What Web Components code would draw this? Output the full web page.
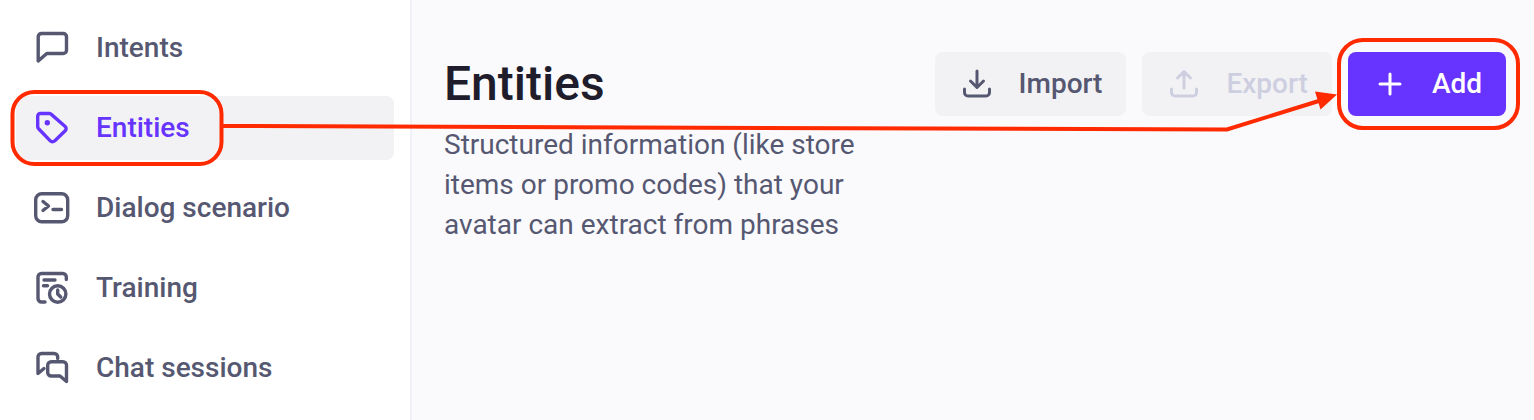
<!DOCTYPE html>
<html lang="en">
<head>
<meta charset="utf-8">
<title>Entities</title>
<style>
	html, body { margin: 0; height: 420px; overflow: hidden; }
	body { font-family: Roboto, "Liberation Sans", sans-serif; }
</style>
</head>
<body>
<app-shell>
	<side-nav slot="nav">
		<nav-item icon="chat">Intents</nav-item>
		<nav-item icon="tag" active>Entities</nav-item>
		<nav-item icon="terminal">Dialog scenario</nav-item>
		<nav-item icon="training">Training</nav-item>
		<nav-item icon="sessions">Chat sessions</nav-item>
	</side-nav>
	<page-header title-text="Entities">
		<action-button slot="actions" icon="download">Import</action-button>
		<action-button slot="actions" icon="upload" disabled>Export</action-button>
		<action-button slot="actions" icon="plus" primary>Add</action-button>
		Structured information (like store items or promo codes) that your avatar can extract from phrases
	</page-header>
</app-shell>
<callout-overlay></callout-overlay>

<script>
const ICONS = {
	chat: `<path d="M4.2 6.8a3.3 3.3 0 0 1 3.3-3.3h21.7a3.3 3.3 0 0 1 3.3 3.3v13.4a3.3 3.3 0 0 1-3.3 3.3H12.8L4.2 31z"/>`,
	tag: `<path d="M3.7 6.2a2.7 2.7 0 0 1 2.7-2.7h8.8a3 3 0 0 1 2.1.9l13.9 12.1a3 3 0 0 1 0 4.3L20.6 30.9a3 3 0 0 1-4.3 0L4.6 18.8a3 3 0 0 1-.9-2.1z"/><circle cx="13.3" cy="12.7" r="2.7" fill="currentColor" stroke="none"/>`,
	terminal: `<rect x="1.7" y="3.7" width="32" height="28" rx="6"/><path d="M9 11.5l5.5 4.5-5.5 4.5M19 19.5h8.5"/>`,
	training: `<path d="M32.3 9.5V7a3.5 3.5 0 0 0-3.5-3.5H7.5A3.5 3.5 0 0 0 4 7v21.5A3.5 3.5 0 0 0 7.5 32H11M10 10h11M9.5 15.7h4"/><circle cx="23.7" cy="24" r="8.2"/><path d="M23.7 20v4l3 3"/>`,
	sessions: `<path d="M23.7 8.5V7a3.5 3.5 0 0 0-3.5-3.5H7.5A3.5 3.5 0 0 0 4 7v16.5l6-5"/><path d="M17.2 11.7h11.8a3.5 3.5 0 0 1 3.5 3.5v16.3l-6.5-5.5h-8.8a3.5 3.5 0 0 1-3.5-3.5v-7.3a3.5 3.5 0 0 1 3.5-3.5z"/>`,
	download: `<path d="M18 5v16M11.5 15l6.5 6.5 6.5-6.5M5.5 23v3.5a3.5 3.5 0 0 0 3.5 3.5h18a3.5 3.5 0 0 0 3.5-3.5V23"/>`,
	upload: `<path d="M18 22V6M11.5 12L18 5.5l6.5 6.5M5.5 23v3.5a3.5 3.5 0 0 0 3.5 3.5h18a3.5 3.5 0 0 0 3.5-3.5V23"/>`,
	plus: `<path d="M18 8v20M8 18h20"/>`,
}

function iconSvg(name, width){
	return `<svg viewBox="0 0 36 36" width="36" height="36" fill="none" stroke="currentColor" stroke-width="${width}" stroke-linecap="round" stroke-linejoin="round">${ICONS[name] || ""}</svg>`
}

class AppShell extends HTMLElement{
	constructor(){
		super()
		this.attachShadow({mode: "open"}).innerHTML = `
			<style>
				:host{ display: grid; grid-template-columns: 412px 1fr; height: 420px; background: #fafafc; }
				aside{ background: #fff; border-right: 2px solid #f1f1f9; box-sizing: border-box; }
				main{ min-width: 0; }
			</style>
			<aside><slot name="nav"></slot></aside>
			<main><slot></slot></main>
		`
	}
}
customElements.define("app-shell", AppShell)

class SideNav extends HTMLElement{
	constructor(){
		super()
		this.attachShadow({mode: "open"}).innerHTML = `
			<style>
				:host{ display: flex; flex-direction: column; gap: 16px; padding: 16px 16px 0 16px; }
			</style>
			<slot></slot>
		`
	}
}
customElements.define("side-nav", SideNav)

class NavItem extends HTMLElement{
	constructor(){
		super()
		this.attachShadow({mode: "open"}).innerHTML = `
			<style>
				:host{
					display: flex; align-items: center; gap: 26px; height: 64px; padding-left: 18px;
					border-radius: 8px; color: #565872;
					font: 500 28px/40px Roboto, "Liberation Sans", sans-serif;
				}
				:host([active]){ background: #f2f2f5; color: #6633ff; }
				svg{ flex: none; display: block; }
			</style>
			${iconSvg(this.getAttribute("icon"), 3.4)}
			<slot></slot>
		`
	}
}
customElements.define("nav-item", NavItem)

class PageHeader extends HTMLElement{
	constructor(){
		super()
		this.attachShadow({mode: "open"}).innerHTML = `
			<style>
				:host{ display: block; padding: 52px 28px 0 32px; }
				.top{ display: flex; align-items: center; justify-content: space-between; height: 64px; }
				h1{ margin: 0; font: 500 48px/64px Roboto, "Liberation Sans", sans-serif; color: #1f1d2b; }
				.actions{ display: flex; gap: 16px; }
				p{ margin: 9px 0 0; width: 430px; font: 400 28px/40px Roboto, "Liberation Sans", sans-serif; color: #565872; }
			</style>
			<div class="top">
				<h1>${this.getAttribute("title-text")}</h1>
				<div class="actions"><slot name="actions"></slot></div>
			</div>
			<p><slot></slot></p>
		`
	}
}
customElements.define("page-header", PageHeader)

class ActionButton extends HTMLElement{
	constructor(){
		super()
		this.attachShadow({mode: "open"}).innerHTML = `
			<style>
				:host{
					display: inline-flex; align-items: center; gap: 24px; height: 64px; padding: 0 24px;
					box-sizing: border-box; border-radius: 8px; background: #f2f2f5; color: #565872;
					font: 500 28px/40px Roboto, "Liberation Sans", sans-serif;
				}
				:host([disabled]){ color: #cdcfe0; }
				:host([primary]){ background: #6633ff; color: #fff; }
				svg{ flex: none; display: block; }
			</style>
			${iconSvg(this.getAttribute("icon"), 3)}
			<slot></slot>
		`
	}
}
customElements.define("action-button", ActionButton)

// red annotation drawn on top of the screenshot
class CalloutOverlay extends HTMLElement{
	constructor(){
		super()
		this.attachShadow({mode: "open"}).innerHTML = `
			<style>
				:host{ position: absolute; left: 0; top: 0; width: 1534px; height: 420px; pointer-events: none; }
				svg{ display: block; }
			</style>
			<svg width="1534" height="420" fill="none" stroke="#ff2a00" stroke-width="4">
				<rect x="12.5" y="92" width="209" height="72" rx="22"/>
				<rect x="1339" y="40" width="179" height="88" rx="24"/>
				<path d="M222 126L1227 129.5L1322 100"/>
				<path d="M1337 94.5L1315 91.5L1320.5 109.5z" fill="#ff2a00" stroke="none"/>
			</svg>
		`
	}
}
customElements.define("callout-overlay", CalloutOverlay)
</script>
</body>
</html>
